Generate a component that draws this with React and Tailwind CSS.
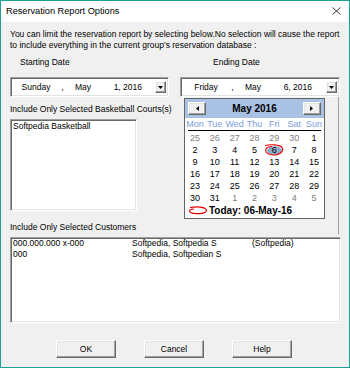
import React from 'react';

const sunken = 'border border-t-[#a0a0a0] border-l-[#a0a0a0] border-r-white border-b-white shadow-[inset_1px_1px_0_#696969,inset_-1px_-1px_0_#e3e3e3]';
const raised = 'border border-t-white border-l-white border-r-[#696969] border-b-[#696969] shadow-[inset_-1px_-1px_0_#a0a0a0,inset_1px_1px_0_#e3e3e3] bg-[#f0f0f0]';

const dayNames = ['Mon', 'Tue', 'Wed', 'Thu', 'Fri', 'Sat', 'Sun'];

const days = Array.from({ length: 42 }, (_, i) => ({
    n: i < 6 ? 25 + i : i < 37 ? i - 5 : i - 36,
    other: i < 6 || i >= 37,
}));

function ArrowButton() {
    return (
        <div className={`w-[11px] h-[12px] flex items-center justify-center ${raised}`}>
            <svg width="5" height="3" viewBox="0 0 5 3"><path d="M0 0h5L2.5 3z" fill="#000" /></svg>
        </div>
    );
}

function DateCombo({ day, month, year }) {
    return (
        <div className={`h-[20px] flex items-center bg-white pl-[5px] pr-[2px] ${sunken}`}>
            <span className="w-[40px] text-center">{day}</span>
            <span className="w-[13px] text-center">,</span>
            <span className="w-[28px] text-center">{month}</span>
            <span className="w-[45px] text-right">{year}</span>
            <span className="flex-1" />
            <ArrowButton />
        </div>
    );
}

function NavButton({ dir }) {
    return (
        <div className={`w-[18px] h-[13px] flex items-center justify-center ${raised}`}>
            <svg width="3" height="5" viewBox="0 0 3 5">
                <path d={dir === 'left' ? 'M3 0v5L0 2.5z' : 'M0 0v5l3-2.5z'} fill="#000" />
            </svg>
        </div>
    );
}

function Calendar() {
    return (
        <div className="absolute left-[2px] top-[20px] w-[157px] h-[137px] border-r border-[#a0a0a0] pl-[2px] pt-[1px]">
            <div className="w-[141px] h-[121px] bg-white border border-[#646464] flex flex-col">
                <div className="h-[19px] bg-[#a9c1e3] flex items-center justify-between px-[3px]">
                    <NavButton dir="left" />
                    <span className="font-bold text-[10px]">May 2016</span>
                    <NavButton dir="right" />
                </div>
                <div className="grid grid-cols-7 h-[12px] text-[9px] leading-[12px] text-[#7b9cd6]">
                    {dayNames.map(d => <span key={d} className="text-center">{d}</span>)}
                </div>
                <div className="mx-[3px] h-px bg-black" />
                <div className="grid grid-cols-7 mt-[1px] text-[9px] leading-[12px]">
                    {days.map((d, i) => (
                        <span key={i} className={`relative text-center ${d.other ? 'text-[#808080]' : 'text-black'}`}>
                            {i === 11 && (
                                <svg className="absolute inset-0" width="20" height="12" viewBox="0 0 20 12">
                                    <ellipse cx="10.5" cy="6.5" rx="7.5" ry="4.2" fill="#8eaacb" />
                                    <path d="M1 1.5 C5 0.5 16 0 18.5 4 C20 8 14 11.5 9 11 C3 10.5 1 8 2 5 C3 3 6 2.5 8 2.5" fill="none" stroke="#e30000" strokeWidth="1.1" />
                                </svg>
                            )}
                            <span className="relative">{d.n}</span>
                        </span>
                    ))}
                </div>
                <div className="flex items-center h-[13px] pl-[3px]">
                    <svg width="20" height="9" viewBox="0 0 20 9">
                        <path d="M2 1.5 C8 0.5 18 0.5 18.5 4.5 C18.5 8 6 8.5 2.5 6.5 C0.5 5 2 3 6 3" fill="none" stroke="#e30000" strokeWidth="1.2" />
                    </svg>
                    <span className="font-bold text-[10px] ml-px">Today: 06-May-16</span>
                </div>
            </div>
        </div>
    );
}

export default function App() {
    return (
        <div className="w-[350px] h-[368px] border border-[#1f9e96] bg-[#f0f0f0] flex flex-col text-black font-['Liberation_Sans',_Arial,_sans-serif] text-[8.5px] leading-[11px]">
            <div className="h-[21px] bg-white flex items-center justify-between pl-[5px] pr-[8px] pb-[1px]">
                <span className="text-[9.2px]">Reservation Report Options</span>
                <svg width="9" height="8" viewBox="0 0 9 8">
                    <path d="M0.5 0.5l8 7M8.5 0.5l-8 7" stroke="#222" strokeWidth="0.9" />
                </svg>
            </div>

            <div className="px-[9px] flex flex-col">
                <p className="mt-[7px]">
                    You can limit the reservation report by selecting below.No selection will cause the report<br />
                    to include everything in the current group's reservation database :
                </p>

                <div className="flex gap-[11px] mt-[6px]">
                    <div className="w-[159px] flex flex-col">
                        <span className="pl-[10px]">Starting Date</span>
                        <div className="mt-[9px]">
                            <DateCombo day="Sunday" month="May" year="1, 2016" />
                        </div>
                    </div>
                    <div className="w-[160px] flex flex-col">
                        <span className="pl-[33px]">Ending Date</span>
                        <div className="mt-[9px] relative z-10">
                            <DateCombo day="Friday" month="May" year="6, 2016" />
                            <Calendar />
                        </div>
                    </div>
                </div>

                <span className="mt-[7px]">Include Only Selected Basketball Courts(s)</span>
                <div className={`mt-[4px] w-[127px] h-[92px] bg-white px-[2px] pt-[1px] ${sunken}`}>
                    Softpedia Basketball
                </div>

                <span className="mt-[11px]">Include Only Selected Customers</span>
                <div className={`mt-[4px] w-[331px] h-[86px] bg-white px-[2px] ${sunken}`}>
                    <div className="flex">
                        <span className="w-[119px]">000.000.000 x-000</span>
                        <span className="w-[120px]">Softpedia, Softpedia S</span>
                        <span>(Softpedia)</span>
                    </div>
                    <div className="flex">
                        <span className="w-[119px]">000</span>
                        <span>Softpedia, Softpedian S</span>
                    </div>
                </div>

                <div className="mt-[17px] flex justify-center gap-[28px] pr-[2px]">
                    {['OK', 'Cancel', 'Help'].map(label => (
                        <div key={label} className={`w-[60px] h-[18px] flex items-center justify-center ${raised}`}>
                            {label}
                        </div>
                    ))}
                </div>
            </div>
        </div>
    );
}
